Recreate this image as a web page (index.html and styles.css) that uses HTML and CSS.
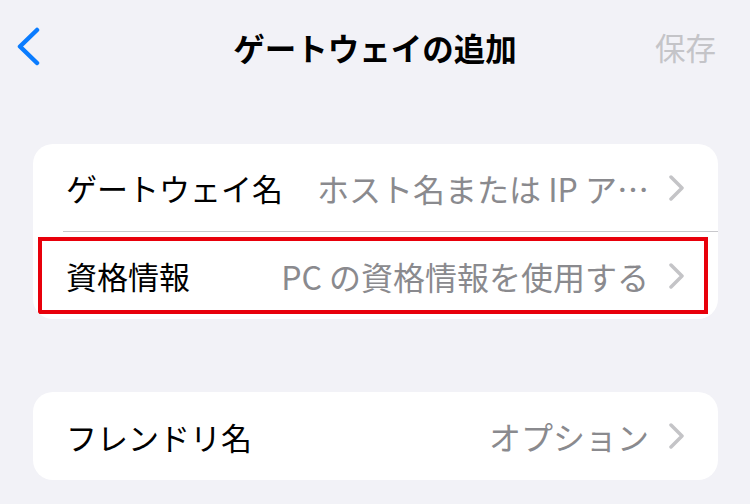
FILE: index.html
```html
<!DOCTYPE html>
<html lang="ja">
<head>
	<meta charset="UTF-8">
	<title>ゲートウェイの追加</title>
	<link rel="stylesheet" href="styles.css">
</head>
<body>
	<div class="nav">
		<div class="nav-left">
			<svg class="back" width="26" height="40" viewBox="0 0 26 40"><polyline points="22,3 5,19.5 22,36" /></svg>
		</div>
		<div class="nav-title">ゲートウェイの追加</div>
		<div class="nav-right">保存</div>
	</div>

	<div class="card first">
		<div class="row">
			<span class="label">ゲートウェイ名</span>
			<span class="value">ホスト名または IP ア…</span>
			<svg class="chev" width="16" height="26" viewBox="0 0 16 26"><polyline points="2,2 13,13 2,24" /></svg>
		</div>
		<div class="sep"></div>
		<div class="row highlight">
			<span class="label">資格情報</span>
			<span class="value">PC の資格情報を使用する</span>
			<svg class="chev" width="16" height="26" viewBox="0 0 16 26"><polyline points="2,2 13,13 2,24" /></svg>
		</div>
	</div>

	<div class="card second">
		<div class="row">
			<span class="label">フレンドリ名</span>
			<span class="value">オプション</span>
			<svg class="chev" width="16" height="26" viewBox="0 0 16 26"><polyline points="2,2 13,13 2,24" /></svg>
		</div>
	</div>
</body>
</html>
```

FILE: styles.css
```css
* {margin: 0; padding: 0; box-sizing: border-box;}
body {
	background: #f2f2f7;
	font-family: "Noto Sans CJK JP", "Noto Sans", sans-serif;
	color: #000;
	width: 750px;
	height: 504px;
	overflow: hidden;
}
.nav {
	height: 96px;
	display: grid;
	grid-template-columns: 120px 1fr 120px;
	align-items: center;
}
.nav-left {padding-left: 15px; padding-bottom: 2px; display: flex; align-items: center;}
.back {fill: none; stroke: #0a7cff; stroke-width: 4.5; stroke-linecap: round; stroke-linejoin: round;}
.nav-title {text-align: center; font-size: 31.5px; font-weight: 700; padding-bottom: 3px;}
.nav-right {text-align: right; padding-right: 34px; padding-bottom: 3px; font-size: 30.5px; color: #c4c4c8;}

.card {
	background: #fff;
	border-radius: 20px;
	margin: 0 32px 0 33px;
	overflow: hidden;
}
.card.first {margin-top: 48px;}
.card.second {margin-top: 73px;}
.row {
	height: 87px;
	display: flex;
	align-items: center;
	padding: 0 33px;
	position: relative;
}
.second .row {height: 88px;}
.label {font-size: 31px; flex: none; white-space: nowrap;}
.value {
	flex: 1;
	font-size: 32px;
	color: #8a8a8e;
	text-align: right;
	white-space: nowrap;
	overflow: hidden;
	margin-left: 34px;
}
.chev {flex: none; margin-left: 20px; fill: none; stroke: #c4c4c7; stroke-width: 3.5; stroke-linecap: round; stroke-linejoin: round;}
.sep {height: 1px; background: #c8c8cc; margin-left: 30px;}
.highlight::after {
	content: "";
	position: absolute;
	left: 5px;
	top: 5px;
	right: 10px;
	bottom: 5px;
	border: 4px solid #e8000b;
}
```
